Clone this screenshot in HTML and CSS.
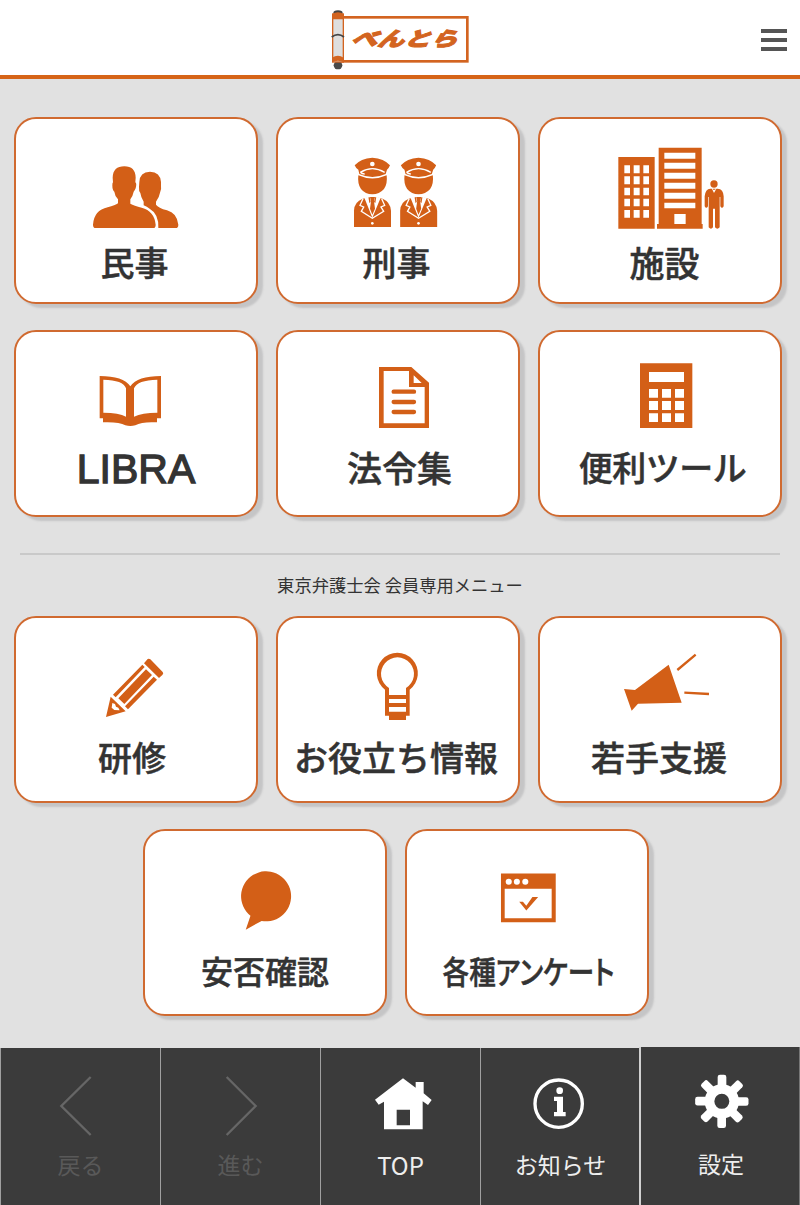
FILE: index.html
```html
<!DOCTYPE html>
<html lang="ja">
<head>
<meta charset="utf-8">
<title>べんとら</title>
<link rel="stylesheet" href="styles.css">
</head>
<body>
<header class="header">
  <svg class="logo" viewBox="0 0 480 222" role="img" aria-label="べんとら">
    <rect x="66" y="52" width="376" height="132" fill="#fff" stroke="#d36420" stroke-width="8"/>
    <ellipse cx="54" cy="39" rx="14" ry="8" fill="#444"/>
    <ellipse cx="54" cy="196" rx="13" ry="12" fill="#4a4a4a"/>
    <rect x="38" y="42" width="32" height="144" fill="#dedede" stroke="#d36420" stroke-width="4"/>
    <path d="M36 58V44Q54 30 71 44V58ZM36 187V173Q54 162 71 173V187Q54 178 36 187Z" fill="#d36420"/>
    <path d="M35 111Q54 97 72 111" fill="none" stroke="#444" stroke-width="5"/>
    <text class="logo-text" transform="translate(90 138) skewX(-26) scale(1 .78)" textLength="320" lengthAdjust="spacingAndGlyphs">べんとら</text>
  </svg>
  <button class="menu" aria-label="メニュー"><span></span><span></span><span></span></button>
</header>
<main class="main">
  <section class="grid">
    <a class="card">
      <svg class="icon tall" viewBox="48 42 720 354">
        <path d="M338 218Q339 184 373 184Q406 184 407 218L406 232Q411 235 407 250Q404 257 401 260Q398 275 391 283V296Q402 302 425 308Q463 318 467 359Q467 369 460 369H287Q279 369 279 359Q282 316 323 307Q346 301 354 295V283Q345 275 343 260Q337 256 337 241Q337 233 339 232Z"/>
        <path d="M418 231Q419 201 450 200Q481 201 483 231V243Q485 254 480 263Q478 276 468 290V299Q475 309 501 316Q531 324 535 359Q535 369 527 369H475Q477 327 449 311Q441 305 431 301V290Q423 278 421 264Q416 259 417 246Z"/>
      </svg>
      <span class="label civil">民事</span>
    </a>
    <a class="card">
      <svg class="icon tall" viewBox="24 42 720 354">
        <defs>
          <g id="officer">
            <path d="M254 181Q272 160 307 158Q342 160 360 181Q357 189 351 194L347 207Q307 225 268 207L265 194Q257 189 254 181Z"/>
            <path d="M265 211Q307 230 350 211Q353 237 342 252Q328 268 307 268Q286 268 273 252Q262 237 265 211Z"/>
            <path d="M252 366V317Q253 290 278 281L300 276H315L338 281Q361 291 363 317V366Z"/>
            <circle cx="307" cy="177" r="7" fill="#fff"/>
            <path d="M271 202Q307 180 344 202M271 202Q276 207 284 207" fill="none" stroke="#fff" stroke-width="4"/>
            <path d="M283 278L307 338L332 278L319 275L316 294L312 291L316 275H299L302 291L298 294L295 275Z" fill="#fff"/>
            <path d="M279 281L270 301L281 306L274 319L307 340L341 319L333 306L344 301L335 281" fill="none" stroke="#fff" stroke-width="4"/>
            <path d="M300 276H315L312 289L315 311L307 329L300 311L303 289Z"/>
            <circle cx="307" cy="355" r="4" fill="#fff"/>
          </g>
        </defs>
        <use href="#officer"/><use href="#officer" x="138.500"/>
      </svg>
      <span class="label criminal">刑事</span>
    </a>
    <a class="card">
      <svg class="icon tall" viewBox="30 42 720 354">
        <path fill-rule="evenodd" d="M265 156H374V371H265ZM283 181V205H300V181ZM311 181V205H329V181ZM340 181V205H357V181ZM283 214V238H300V214ZM311 214V238H329V214ZM340 214V238H357V214ZM283 248V271H300V248ZM311 248V271H329V248ZM340 248V271H357V248ZM283 281V304H300V281ZM311 281V304H329V281ZM340 281V304H357V281ZM283 315V338H300V315ZM311 315V338H329V315ZM340 315V338H357V315Z"/>
        <path fill-rule="evenodd" d="M386 128H515V357H518V371H381V357H386ZM403 143V161H496V143ZM403 173V191H496V173ZM403 203V221H496V203ZM403 233V251H496V233ZM403 263V281H496V263ZM403 293V310H496V293ZM433 327V357H467V327Z"/>
        <circle cx="552" cy="237" r="11"/>
        <path d="M541 251H563Q580 252 581 274V304Q576 313 571 304V276H569V367Q562 375 555 367V311H549V367Q543 375 536 367V276H534V304Q529 313 524 304V274Q526 252 541 251Z"/>
        <path d="M545 250L552 264L560 250L556 250V254H549V250Z" fill="#fff"/>
      </svg>
      <span class="label facility">施設</span>
    </a>
    <a class="card">
      <svg class="icon low" viewBox="48 21 720 330">
        <path fill-rule="evenodd" d="M299 153Q370 153 391 184Q412 153 483 153V280H471V292Q427 289 406 301Q391 305 376 301Q357 290 309 292V280H299ZM310 164V263Q357 263 378 275V190Q370 165 310 164ZM402 275Q426 263 472 263V164Q412 165 402 190Z"/>
      </svg>
      <span class="label latin">LIBRA</span>
    </a>
    <a class="card">
      <svg class="icon low" viewBox="834 21 720 330">
        <path fill-rule="evenodd" d="M1137 126H1234L1287 173V309H1137ZM1151 138V295H1274V186H1227V138ZM1241 151V174H1265Z"/>
        <path d="M1181 200H1242M1181 231H1242M1181 261H1242" fill="none" stroke="#d35f17" stroke-width="13" stroke-linecap="round"/>
      </svg>
      <span class="label law">法令集</span>
    </a>
    <a class="card">
      <svg class="icon low" viewBox="420 21 720 330">
        <path fill-rule="evenodd" d="M720 115H877V309H720ZM747 141V171H852V141ZM747 192V218H774V192ZM786 192V218H813V192ZM825 192V218H852V192ZM747 228V255H774V228ZM786 228V255H813V228ZM825 228V255H852V228ZM747 265V291H774V265ZM786 265V291H813V265ZM825 265V291H852V265Z"/>
      </svg>
      <span class="label tools">便利ツール</span>
    </a>
  </section>
  <h2 class="caption">東京弁護士会 会員専用メニュー</h2>
  <section class="grid">
    <a class="card">
      <svg class="icon" viewBox="48 234 720 342">
        <path d="M432 370L443 357Q447 355 451 358L488 396Q492 401 487 405L477 414ZM427 374L434 381L347 472L339 464ZM438 388L456 405L373 492L355 475ZM461 410L471 419L384 508L375 499ZM332 470L377 514L318 531Z"/>
        <path d="M337 489L345 492L348 500L355 503L359 511L343 510L335 503Z" fill="#fff"/>
      </svg>
      <span class="label training">研修</span>
    </a>
    <a class="card">
      <svg class="icon" viewBox="834 234 720 342">
        <path fill-rule="evenodd" d="M1155 449A61.500 61.500 0 1 1 1229 449V527H1218V540H1167V527H1155ZM1167 444V465H1218V444A49.500 49.500 0 1 0 1167 444ZM1167 477V489H1218V477ZM1167 501V515H1218V501Z"/>
      </svg>
      <span class="label useful">お役立ち情報</span>
    </a>
    <a class="card">
      <svg class="icon" viewBox="420 234 720 342">
        <path d="M672 447L705 450L806 374L845 488L714 491L695 512Z"/>
        <path d="M832 390L887 344M853 458L927 462" fill="none" stroke="#d35f17" stroke-width="7"/>
      </svg>
      <span class="label support">若手支援</span>
    </a>
  </section>
  <section class="pair">
    <a class="card">
      <svg class="icon" viewBox="46 36 710 337.300">
        <path d="M358 287A74 74 0 1 1 391 302L344 328Z"/>
      </svg>
      <span class="label small">安否確認</span>
    </a>
    <a class="card">
      <svg class="icon" viewBox="820 36 710 337.300">
        <path fill-rule="evenodd" d="M1098 162H1260V306H1098ZM1109 207V294H1248V207Z"/>
        <g fill="#fff"><circle cx="1121" cy="186" r="9"/><circle cx="1145" cy="186" r="9"/><circle cx="1170" cy="186" r="9"/></g>
        <path d="M1152 245H1163L1173 257L1191 231H1208L1173 271Z"/>
      </svg>
      <span class="label condensed">各種アンケート</span>
    </a>
  </section>
</main>
<nav class="nav">
  <a class="tab disabled">
    <svg class="tab-icon" viewBox="3 24 480 276"><path d="M272 111L184 198L272 285" fill="none" stroke="#666" stroke-width="7"/></svg>
    <span class="tab-label">戻る</span>
  </a>
  <a class="tab disabled">
    <svg class="tab-icon" viewBox="483 24 480 276"><path d="M680 111L767 198L680 285" fill="none" stroke="#666" stroke-width="7"/></svg>
    <span class="tab-label">進む</span>
  </a>
  <a class="tab">
    <svg class="tab-icon" viewBox="963 24 480 276"><path fill-rule="evenodd" d="M1125 179L1209 115L1247 143V126H1271V160L1295 180L1284 195L1268 184V268H1152V185L1136 194ZM1190 209V256H1230V209Z"/></svg>
    <span class="tab-label top">TOP</span>
  </a>
  <a class="tab">
    <svg class="tab-icon" viewBox="243 24 480 276"><circle cx="476" cy="191" r="71" fill="none" stroke="#fff" stroke-width="10"/><circle cx="479" cy="152" r="10"/><path d="M462 170H489V216H497V229H462V216H471V183H462Z"/></svg>
    <span class="tab-label">お知らせ</span>
  </a>
  <a class="tab active">
    <svg class="tab-icon" viewBox="720 21 480 276">
      <defs><rect id="tooth" x="953" y="104" width="26" height="40" rx="7"/></defs>
      <circle cx="965.500" cy="184" r="37" fill="none" stroke="#fff" stroke-width="29"/>
      <use href="#tooth"/><use href="#tooth" transform="rotate(45 965.500 184)"/><use href="#tooth" transform="rotate(90 965.500 184)"/><use href="#tooth" transform="rotate(135 965.500 184)"/><use href="#tooth" transform="rotate(180 965.500 184)"/><use href="#tooth" transform="rotate(225 965.500 184)"/><use href="#tooth" transform="rotate(270 965.500 184)"/><use href="#tooth" transform="rotate(315 965.500 184)"/>
    </svg>
    <span class="tab-label settings">設定</span>
  </a>
</nav>
</body>
</html>
```
FILE: styles.css
```css
* { box-sizing: border-box; }
body {
  margin: 0;
  width: 800px;
  height: 1205px;
  display: flex;
  flex-direction: column;
  background: #e1e1e1;
  color: #333;
  font-family: "Noto Sans CJK JP", sans-serif;
  overflow: hidden;
}
.header {
  height: 79px;
  display: grid;
  grid-template-columns: 1fr 160px 1fr;
  align-items: start;
  background: #fff;
  border-bottom: 4px solid #d66417;
}
.logo { grid-column: 2; display: block; width: 160px; height: 74px; }
.logo-text { font-size: 76px; font-weight: 900; fill: #d36420; stroke: #d36420; stroke-width: 4px; }
.menu {
  justify-self: end;
  margin: 29px 13px 0 0;
  padding: 0;
  border: 0;
  background: none;
  display: flex;
  flex-direction: column;
  gap: 5px;
}
.menu span { width: 26px; height: 4px; background: #555; }
.main { height: 968px; padding: 38px 18px 0 14px; }
.grid { display: grid; grid-template-columns: repeat(3, 244px); gap: 26px 18px; }
.pair { display: flex; gap: 18px; margin: 26px 0 0 129px; }
.card {
  width: 244px;
  height: 187px;
  display: flex;
  flex-direction: column;
  align-items: center;
  background: #fff;
  border: 2px solid #d06a30;
  border-radius: 22px;
  box-shadow: 5px 4px 2px #c5c5c6;
}
.icon { display: block; width: 240px; height: 114px; flex: none; fill: #d35f17; }
.icon.tall { height: 118px; }
.icon.low { height: 110px; }
.label {
  font-size: 34px;
  font-weight: 500;
  line-height: 50px;
  white-space: nowrap;
  -webkit-text-stroke: .5px #333;
}
.label.latin { font-family: "Liberation Sans", sans-serif; font-size: 41px; line-height: 54px; -webkit-text-stroke: 1.3px #333; }
.label.small { font-size: 32px; }
.label.condensed { font-size: 32px; font-feature-settings: "palt"; transform: scaleX(.83); margin-left: 4px; }
.label.civil, .label.criminal { margin-left: -3px; }
.label.facility { font-size: 35px; margin-left: 9px; }
.label.law { font-size: 35px; margin-left: 3px; }
.label.tools { letter-spacing: -.5px; margin-left: 5px; }
.label.training { margin-left: -8px; }
.label.useful { margin-left: -4px; }
.label.support { margin-left: -2px; }
.caption {
  margin: 36px 2px 0 6px;
  height: 63px;
  padding-top: 14px;
  border-top: 2px solid #c9c9c9;
  font-size: 17.300px;
  font-weight: 400;
  line-height: 32px;
  text-align: center;
}
.nav { height: 158px; display: grid; grid-template-columns: repeat(5, 160px); align-items: end; }
.tab {
  height: 157px;
  display: flex;
  flex-direction: column;
  align-items: center;
  background: #3b3b3b;
  border-left: 1px solid #a0a0a0;
  color: #eee;
}
.tab.disabled { color: #595959; }
.tab.active { height: 158px; border-left: 2px solid #d0d0d0; border-right: 1px solid #777; margin-left: -1px; width: 161px; }
.tab-icon { display: block; width: 160px; height: 92px; flex: none; fill: #fff; }
.tab-label { font-size: 23px; line-height: 48px; white-space: nowrap; }
.tab-label.top { font-size: 24px; line-height: 50px; }
.tab-label.settings { margin-left: 2px; }
```
